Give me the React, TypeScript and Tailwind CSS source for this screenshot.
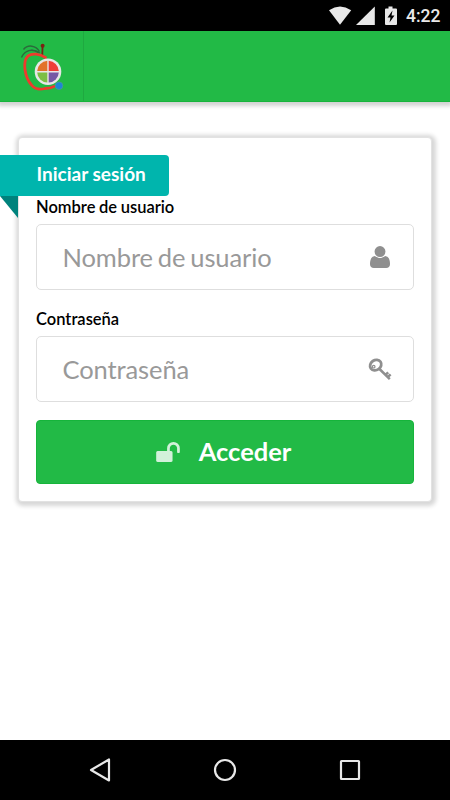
import type { ReactNode } from 'react';

const UserIcon = () => (
  <svg viewBox="0 0 1408 1536" className="mr-[23px] h-[22px] w-[20px] shrink-0" fill="#8f8f8f">
    <path
      transform="translate(0 1408) scale(1 -1)"
      d="M1408 131q0-120-73-189.500t-194-69.500h-874q-121 0-194 69.500t-73 189.500q0 53 3.500 103.500t14 109t26.500 108.500t43 97.500t62 81t85.500 53.500t111.500 20q9 0 42-21.500t74.500-48t108-48t133.500-21.500t133.500 21.500t108 48t74.500 48t42 21.500q61 0 111.500-20t85.500-53.500t62-81t43-97.500t26.500-108.500t14-109t3.500-103.500zM1088 1024q0-159-112.500-271.500t-271.500-112.500t-271.500 112.500t-112.500 271.500t112.500 271.500t271.500 112.500t271.500-112.500t112.500-271.500z"
    />
  </svg>
);

const KeyIcon = () => (
  <svg viewBox="0 0 24 23" className="mr-[21px] h-[23px] w-[24px] shrink-0" fill="none" stroke="#8f8f8f">
    <ellipse cx="7.700" cy="7.100" rx="5.900" ry="5" strokeWidth="2.800" transform="rotate(-35 7.700 7.100)" />
    <circle cx="5.700" cy="8.700" r="1.300" strokeWidth="1.200" />
    <path d="M11.500 11L21.800 21.100M17.800 16.700L20.200 14.300M20 18.900L22.600 16.300" strokeWidth="2.500" />
  </svg>
);

const UnlockIcon = () => (
  <svg viewBox="64 128 1664 1408" className="mr-[19px] h-[20px] w-[24px]" fill="#fff" fillOpacity="0.8">
    <path d="M1728 576v256q0 26-19 45t-45 19h-64q-26 0-45-19t-19-45v-256q0-106-75-181t-181-75-181 75-75 181v192h96q40 0 68 28t28 68v576q0 40-28 68t-68 28h-960q-40 0-68-28t-28-68v-576q0-40 28-68t68-28h672v-192q0-185 131.500-316.500t316.500-131.500 316.500 131.500 131.500 316.500z" />
  </svg>
);

const Logo = () => (
  <svg viewBox="16 38 52 56" className="h-[56px] w-[52px]" fill="none">
    <path d="M21.500 57.500C25 50 32 48.500 38 52.500M23.500 49.500C28 44 36 45.500 39.500 51.500M26 52C31 49 36 50 40 53" stroke="#2b6b3b" strokeWidth="1.400" />
    <path d="M42.600 45.500C42.500 49 42.300 52 42.300 55" stroke="#6f2a12" strokeWidth="1.800" />
    <circle cx="42.600" cy="45.800" r="2" fill="#7a2313" />
    <path d="M45.500 57.500C40 54 31.500 52.500 27.500 56.500C22.500 62 24.500 77 31.500 85C35 89.500 41 89.500 45 88.500C49 88.500 51 88 54 86.500" stroke="#ef3a2d" strokeWidth="2.800" strokeLinecap="round" />
    <circle cx="48" cy="71.700" r="13.300" fill="#e8e6e6" />
    <path d="M47.300 71V60.800A10.800 10.800 0 0 0 37.200 71Z" fill="#e2722a" />
    <path d="M48.700 71V60.800A10.800 10.800 0 0 1 58.800 71Z" fill="#ee3d38" />
    <path d="M47.300 72.400V82.600A10.800 10.800 0 0 1 37.200 72.400Z" fill="#7bbf45" />
    <path d="M48.700 72.400V82.600A10.800 10.800 0 0 0 58.800 72.400Z" fill="#7658a5" />
    <circle cx="59" cy="85.700" r="3.800" fill="#1d86d8" stroke="#4d9a9b" strokeWidth="0.700" />
  </svg>
);

const StatusBar = () => (
  <div className="flex h-[31px] items-center justify-end bg-black font-['Roboto',sans-serif] text-[#e8e8e8]">
    <svg viewBox="328 0 72 31" className="h-[31px] w-[72px]" fill="#e8e8e8">
      <path d="M329 10.200Q340 3 351.200 10.200L340 24.700Z" />
      <path d="M374.800 6.500V25H356Z" />
      <path
        fillRule="evenodd"
        d="M388.500 6.500h4v2h3.500q1 0 1 1v14.500q0 1-1 1h-10q-1 0-1-1V9.500q0-1 1-1h2.500ZM392.500 10.500L387.500 17.500H390.500L389.500 22.500L394.500 15.500H391.500Z"
      />
    </svg>
    <span className="ml-[6px] mr-[10px] mt-[2px] w-[34px] whitespace-nowrap text-[17.500px] font-medium leading-[31px]">4:22</span>
  </div>
);

const Field = ({ label, icon }: { label: string; icon: ReactNode }) => (
  <label className="block">
    <span className="block h-[25px] text-[16.500px] font-semibold leading-[16px] text-black [word-spacing:-0.5px]">{label}</span>
    <span className="flex h-[66px] items-center rounded-[5px] border border-[#dedede] bg-white">
      <input
        placeholder={label}
        className="mt-[-1px] min-w-0 flex-1 bg-transparent pl-[25.500px] text-[25.500px] leading-[34px] tracking-[-0.1px] outline-none [word-spacing:-1.500px] placeholder:text-[#999]"
      />
      {icon}
    </span>
  </label>
);

export default function App() {
  return (
    <div className="flex h-[800px] w-[450px] flex-col overflow-hidden bg-white font-['Lato',sans-serif]">
      <StatusBar />
      <header className="flex h-[71px] shrink-0 border-b border-[#16b43b] bg-[#22ba46] shadow-[0_2px_4px_2px_rgba(0,0,0,0.18)]">
        <div className="flex w-[84px] items-start border-r border-[#1fa940] pl-[16px] pt-[7px]">
          <Logo />
        </div>
      </header>
      <main className="flex-1 px-[18px] pt-[35px]">
        <form className="h-[365px] rounded-[4px] border border-[#e2e2e2] bg-white px-[17px] pt-[17px] shadow-[1px_1px_4px_3px_rgba(0,0,0,0.16)]">
          <div className="relative -ml-[36px] h-[41px] w-[169px] rounded-r-[4px] bg-[#00b5ad] pl-[36.500px] text-[19px] font-bold leading-[38px] text-white">
            Iniciar sesión
            <span className="absolute left-0 top-full h-[22px] w-[18px] bg-[#00827c] [clip-path:polygon(0_0,100%_0,100%_100%)]" />
          </div>
          <div className="mt-[3px] flex flex-col gap-[21px]">
            <Field label="Nombre de usuario" icon={<UserIcon />} />
            <Field label="Contraseña" icon={<KeyIcon />} />
          </div>
          <button
            type="button"
            className="mt-[18px] flex h-[64px] w-full items-center justify-center rounded-[4px] border border-[#16b43b] bg-[#22ba46] pr-[3px] text-[25.500px] font-bold text-white"
          >
            <UnlockIcon />
            <span className="-mt-[1px]">Acceder</span>
          </button>
        </form>
      </main>
      <nav className="h-[60px] shrink-0 bg-black">
        <svg viewBox="0 740 450 60" className="h-[60px] w-[450px]" fill="none" stroke="#e8e8e8" strokeWidth="2.200">
          <path d="M109 759.500V780.500L91 770Z" strokeLinejoin="round" />
          <circle cx="225" cy="770" r="10" />
          <rect x="341" y="761" width="18" height="18" rx="0.500" />
        </svg>
      </nav>
    </div>
  );
}
